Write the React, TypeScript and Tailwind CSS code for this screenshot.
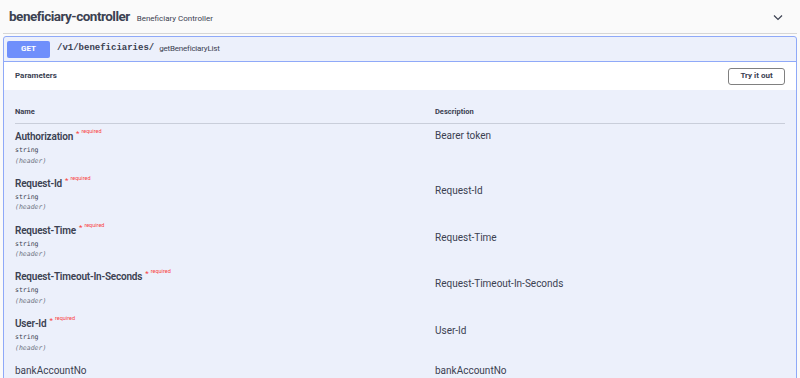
const rows = [
  { name: 'Authorization', desc: 'Bearer token', top: true },
  { name: 'Request-Id', desc: 'Request-Id' },
  { name: 'Request-Time', desc: 'Request-Time' },
  { name: 'Request-Timeout-In-Seconds', desc: 'Request-Timeout-In-Seconds' },
  { name: 'User-Id', desc: 'User-Id' },
]

function ParamRow({ name, desc, top }: { name: string; desc: string; top?: boolean }) {
  return (
    <div className="flex h-[46.8px]">
      <div className="w-[420px] shrink-0">
        <div className="flex items-start leading-none">
          <span className="text-[10px] font-semibold tracking-[-0.2px] text-[#3b4151]">{name}</span>
          <span className="ml-[3px] mt-[-2px] text-[8px] text-[#f93e3e]">*</span>
          <span className="ml-[2px] mt-[-3px] text-[5.5px] text-[#f93e3e]">required</span>
        </div>
        <div className="mt-[5px] font-['DejaVu_Sans_Mono',monospace] text-[6.5px] leading-none text-[#3b4151]">
          string
        </div>
        <div className="mt-[4px] font-['DejaVu_Sans_Mono',monospace] text-[6.5px] italic leading-none text-[#6b7080]">
          (header)
        </div>
      </div>
      <div className={`text-[10px] leading-none text-[#3b4151] ${top ? 'mt-[-1px]' : 'mt-[7px]'}`}>{desc}</div>
    </div>
  )
}

export default function App() {
  return (
    <main className="h-[378px] w-[800px] overflow-hidden bg-[#fafafa] font-['Roboto',sans-serif]">
      <div className="mx-[3px] flex h-[34px] items-center justify-between border-b border-[#d6d6d6] pl-[6px] pr-[14px]">
        <div className="flex items-baseline">
          <h3 className="text-[13.5px] font-bold tracking-[-0.5px] text-[#3b4151]">beneficiary-controller</h3>
          <span className="ml-[7px] text-[8px] text-[#3b4151]">Beneficiary Controller</span>
        </div>
        <svg width="10" height="7" viewBox="0 0 10 7" className="mt-[2px]">
          <path d="M1 1.5 L5 5.5 L9 1.5" fill="none" stroke="#3b4151" strokeWidth="1.2" />
        </svg>
      </div>

      <section className="mx-[3px] mt-[2px] rounded-[3px] border border-[#8fa9f8] bg-[#ecf0fb] pb-[40px]">
        <div className="flex h-[25px] items-center border-b border-[#8fa9f8] px-[3px]">
          <span className="flex h-[17px] w-[43px] items-center justify-center rounded-[2px] bg-[#6f8ffb] text-[8px] font-bold text-white">
            GET
          </span>
          <span className="ml-[7px] font-['Liberation_Mono',monospace] text-[9px] font-semibold text-[#3b4151]">
            /v1/beneficiaries/
          </span>
          <span className="ml-[5px] text-[8px] tracking-[-0.2px] text-[#3b4151]">getBeneficiaryList</span>
        </div>

        <div className="flex h-[28px] items-center justify-between bg-white pl-[11px] pr-[11px]">
          <span className="text-[8px] font-bold text-[#3b4151]">Parameters</span>
          <button className="flex h-[17px] w-[57px] items-center justify-center rounded-[3px] border-[1.5px] border-[#808080] text-[8px] font-bold text-[#3b4151]">
            Try it out
          </button>
        </div>

        <div className="px-[11px] pt-[18px]">
          <div className="flex h-[16px] items-start border-b border-[#c9ceda] text-[7.5px] font-bold leading-none text-[#3b4151]">
            <span className="w-[420px]">Name</span>
            <span>Description</span>
          </div>
          <div className="pt-[8px]">
            {rows.map((r) => (
              <ParamRow key={r.name} {...r} />
            ))}
            <div className="flex text-[10px] leading-none text-[#3b4151]">
              <span className="w-[420px]">bankAccountNo</span>
              <span>bankAccountNo</span>
            </div>
          </div>
        </div>
      </section>
    </main>
  )
}
